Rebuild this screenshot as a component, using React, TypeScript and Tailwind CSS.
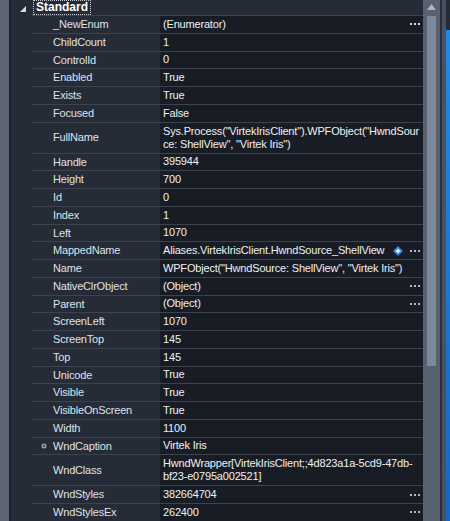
import React from "react";

type Prop = {
  name: string;
  value: string[];
  dots?: boolean;
  bright?: boolean;
  diamond?: boolean;
  expander?: boolean;
};

const PROPS: Prop[] = [
  { name: "_NewEnum", value: ["(Enumerator)"], dots: true, bright: true },
  { name: "ChildCount", value: ["1"] },
  { name: "ControlId", value: ["0"] },
  { name: "Enabled", value: ["True"] },
  { name: "Exists", value: ["True"] },
  { name: "Focused", value: ["False"] },
  {
    name: "FullName",
    value: ['Sys.Process("VirtekIrisClient").WPFObject("HwndSour', 'ce: ShellView", "Virtek Iris")'],
  },
  { name: "Handle", value: ["395944"] },
  { name: "Height", value: ["700"] },
  { name: "Id", value: ["0"] },
  { name: "Index", value: ["1"] },
  { name: "Left", value: ["1070"] },
  { name: "MappedName", value: ["Aliases.VirtekIrisClient.HwndSource_ShellView"], dots: true, diamond: true },
  { name: "Name", value: ['WPFObject("HwndSource: ShellView", "Virtek Iris")'] },
  { name: "NativeClrObject", value: ["(Object)"], dots: true },
  { name: "Parent", value: ["(Object)"], dots: true },
  { name: "ScreenLeft", value: ["1070"] },
  { name: "ScreenTop", value: ["145"] },
  { name: "Top", value: ["145"] },
  { name: "Unicode", value: ["True"] },
  { name: "Visible", value: ["True"] },
  { name: "VisibleOnScreen", value: ["True"] },
  { name: "Width", value: ["1100"] },
  { name: "WndCaption", value: ["Virtek Iris"], expander: true },
  { name: "WndClass", value: ["HwndWrapper[VirtekIrisClient;;4d823a1a-5cd9-47db-", "bf23-e0795a002521]"] },
  { name: "WndStyles", value: ["382664704"], dots: true },
  { name: "WndStylesEx", value: ["262400"], dots: true },
];

function Dots({ bright }: { bright?: boolean }) {
  const c = bright ? "bg-[#d7dbe3]" : "bg-[#b4bac4]";
  return (
    <div className="flex gap-[2px] items-center">
      <span className={`w-[2px] h-[2px] ${c}`} />
      <span className={`w-[2px] h-[2px] ${c}`} />
      <span className={`w-[2px] h-[2px] ${c}`} />
    </div>
  );
}

function Diamond() {
  return (
    <svg width="10" height="10" viewBox="0 0 10 10">
      <polygon points="5,0 10,5 5,10 0,5" fill="#2f86e0" />
      <polygon points="5,2.5 7.5,5 5,7.5 2.5,5" fill="#dbeaff" />
    </svg>
  );
}

function Expander() {
  return (
    <svg width="6" height="6" viewBox="0 0 6 6" className="absolute left-[9px] top-1/2 -translate-y-1/2">
      <circle cx="3" cy="3" r="2.5" fill="#9aa1ab" />
      <circle cx="3" cy="3" r="1" fill="#2a303a" />
    </svg>
  );
}

function Row({ p }: { p: Prop }) {
  const tall = p.value.length > 1;
  return (
    <div className={`flex border-b border-[#3d424b] ${tall ? "h-[31px]" : "h-[17.75px]"}`}>
      <div className="relative w-[128px] shrink-0 pl-[21px] flex items-center text-[#dfe2e7]">
        {p.expander && <Expander />}
        {p.name}
      </div>
      <div className="flex-1 min-w-0 flex items-center bg-[#181d25] pl-[3px] pr-[3px] text-[#eef0f3]">
        <div className="flex-1 min-w-0 leading-[13px] whitespace-nowrap overflow-hidden">
          {p.value.map((v, i) => (
            <div key={i}>{v}</div>
          ))}
        </div>
        {p.diamond && (
          <div className="mr-[7px] shrink-0">
            <Diamond />
          </div>
        )}
        {p.dots && <Dots bright={p.bright} />}
      </div>
    </div>
  );
}

export default function App() {
  return (
    <div className="w-[450px] h-[521px] overflow-hidden flex bg-[#262c37] text-[11px] tracking-[-0.18px] font-['Liberation_Sans',sans-serif]">
      {/* outer frame */}
      <div className="w-[9px] bg-[#5b6574]" />
      <div className="w-[2px] bg-[#1b2028]" />

      {/* property grid */}
      <div className="w-[412px] flex flex-col">
        <div className="h-[17px] flex items-center border-b border-[#3d424b] ml-[21px] relative">
          <svg width="6" height="6" viewBox="0 0 6 6" className="absolute left-[-12px] top-[6px]">
            <polygon points="6,0 6,6 0,6" fill="#d7dbe2" />
          </svg>
          <span className="ml-[1px] px-[2px] leading-[13px] border border-dotted border-[#c9cdd4] font-bold text-[12px] tracking-normal text-white">
            Standard
          </span>
        </div>
        {PROPS.map((p) => (
          <div key={p.name} className="ml-[21px]">
            <Row p={p} />
          </div>
        ))}
      </div>

      {/* scrollbar */}
      <div className="w-[17px] bg-[#57616f] flex flex-col items-center">
        <svg width="9" height="6" viewBox="0 0 9 6" className="mt-[4px]">
          <polygon points="4.5,0 9,6 0,6" fill="#aeb5c1" />
        </svg>
        <div className="mt-[6px] w-[9px] h-[350px] bg-[#7d899d]" />
      </div>
      <div className="w-[2px] bg-[#2a303a]" />
      <div className="w-[4px] bg-[#4a525f]" />
      <div className="w-[4px] flex flex-col">
        <div className="h-[30px] bg-[#262c37]" />
        <div className="flex-1 bg-gradient-to-b from-[#1f8be6] to-[#1467c4]" />
      </div>
    </div>
  );
}
